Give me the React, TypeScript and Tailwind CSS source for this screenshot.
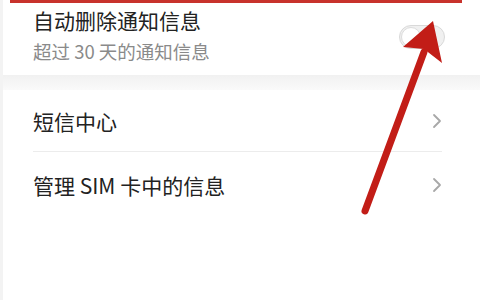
import React from "react";

const font = { fontFamily: '"Noto Sans CJK SC", "Noto Sans", sans-serif' };

function Chevron() {
  return (
    <svg width="10" height="16" viewBox="0 0 10 16" className="shrink-0">
      <path d="M2 2 L8 8 L2 14" fill="none" stroke="#a8a8a8" strokeWidth="1.8" strokeLinecap="round" strokeLinejoin="round" />
    </svg>
  );
}

export default function App() {
  return (
    <div className="relative w-[480px] h-[300px] overflow-hidden bg-white" style={font}>
      <div className="absolute left-[10px] right-[18px] top-0 h-[3px] bg-[#c8322c]" />
      <div className="flex items-start justify-between pl-[33px] pr-[35px] pt-[6px] pb-[12px]">
        <div className="flex flex-col">
          <span className="text-[21px] leading-[28px] text-[#222]">自动删除通知信息</span>
          <span className="mt-[5px] text-[18.5px] leading-[24px] text-[#8a8a8a]">超过 30 天的通知信息</span>
        </div>
        <div className="mt-[19px] flex h-[24px] w-[46px] items-center rounded-full border border-[#d9d9d9] bg-[#f0f0f0] px-[1px]">
          <div className="h-[20px] w-[20px] rounded-full bg-white border border-[#dcdcdc]" />
        </div>
      </div>
      <div className="h-[15px] bg-gradient-to-b from-[#f1f1f1] to-[#fafafa]" />
      <div className="flex flex-col pl-[33px] pr-[38px]">
        <div className="flex h-[62px] items-center justify-between border-b border-[#ececec]">
          <span className="text-[21px] leading-[28px] text-[#222]">短信中心</span>
          <Chevron />
        </div>
        <div className="flex h-[66px] items-center justify-between">
          <span className="text-[21px] leading-[28px] text-[#222]">管理 SIM 卡中的信息</span>
          <Chevron />
        </div>
      </div>
      <div className="absolute left-0 top-0 h-full w-[3px] bg-[#f3f3f3]" />
      <svg className="absolute left-0 top-0" width="480" height="300" viewBox="0 0 480 300">
        <line x1="365" y1="211" x2="424" y2="52" stroke="#c21d17" strokeWidth="7" strokeLinecap="round" />
        <polygon points="433,21 403,47 424,49 442,63" fill="#c21d17" />
      </svg>
    </div>
  );
}
